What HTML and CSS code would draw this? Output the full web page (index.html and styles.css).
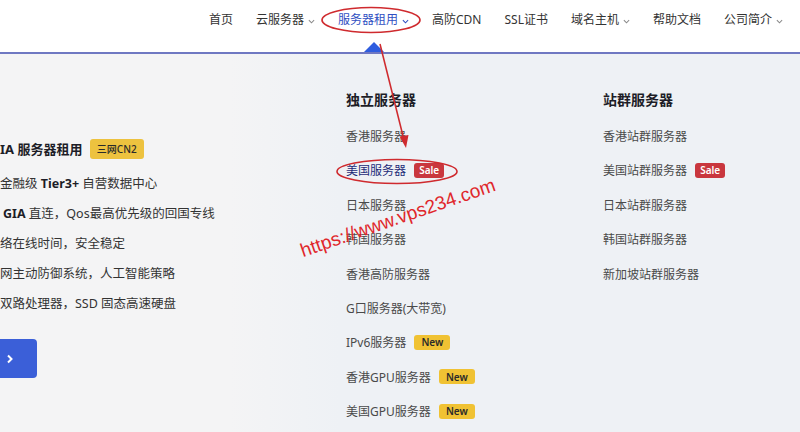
FILE: index.html
```html
<!DOCTYPE html>
<html lang="zh-CN">
<head>
    <meta charset="UTF-8">
    <meta name="viewport" content="width=device-width, initial-scale=1.0">
    <title>服务器租用</title>
    <link rel="stylesheet" href="styles.css">
</head>
<body>
    <header class="topbar">
        <nav class="menu">
            <a class="menu-item" href="#">首页</a>
            <a class="menu-item" href="#">云服务器<svg class="chev" viewBox="0 0 8 5"><path d="M1 1l3 3 3-3"/></svg></a>
            <a class="menu-item active" href="#">服务器租用<svg class="chev" viewBox="0 0 8 5"><path d="M1 1l3 3 3-3"/></svg><span class="caret"></span></a>
            <a class="menu-item" href="#">高防CDN</a>
            <a class="menu-item" href="#">SSL证书</a>
            <a class="menu-item" href="#">域名主机<svg class="chev" viewBox="0 0 8 5"><path d="M1 1l3 3 3-3"/></svg></a>
            <a class="menu-item" href="#">帮助文档</a>
            <a class="menu-item" href="#">公司简介<svg class="chev" viewBox="0 0 8 5"><path d="M1 1l3 3 3-3"/></svg></a>
        </nav>
    </header>

    <main class="mega">
        <section class="promo">
            <h3 class="promo-title">IA 服务器租用 <span class="tag tag-cn2">三网CN2</span></h3>
            <ul class="promo-list">
                <li>金融级 <b>Tier3+</b> 自营数据中心</li>
                <li class="indent"><b>GIA</b> 直连，Qos最高优先级的回国专线</li>
                <li>络在线时间，安全稳定</li>
                <li>网主动防御系统，人工智能策略</li>
                <li>双路处理器，SSD 固态高速硬盘</li>
            </ul>
            <a class="promo-btn" href="#"><svg viewBox="0 0 8 10"><path d="M2 1.5l3.5 3.5-3.5 3.5"/></svg></a>
        </section>

        <section class="col">
            <h4>独立服务器</h4>
            <ul>
                <li>香港服务器</li>
                <li class="hot">美国服务器 <span class="tag tag-sale">Sale</span></li>
                <li>日本服务器</li>
                <li>韩国服务器</li>
                <li>香港高防服务器</li>
                <li>G口服务器(大带宽)</li>
                <li>IPv6服务器 <span class="tag tag-new">New</span></li>
                <li>香港GPU服务器 <span class="tag tag-new">New</span></li>
                <li>美国GPU服务器 <span class="tag tag-new">New</span></li>
            </ul>
        </section>

        <section class="col">
            <h4>站群服务器</h4>
            <ul>
                <li>香港站群服务器</li>
                <li>美国站群服务器 <span class="tag tag-sale">Sale</span></li>
                <li>日本站群服务器</li>
                <li>韩国站群服务器</li>
                <li>新加坡站群服务器</li>
            </ul>
        </section>
    </main>

    <!-- red annotations drawn over the screenshot -->
    <svg class="marks" viewBox="0 0 800 432">
        <ellipse cx="371" cy="20" rx="49" ry="12.5"/>
        <ellipse cx="397" cy="171.5" rx="60" ry="12"/>
        <path d="M380 44L404 140"/>
        <path class="head" d="M399.5 136.5L406 148l2.5-13z"/>
    </svg>
    <span class="watermark">https://www.vps234.com</span>
</body>
</html>
```

FILE: styles.css
```css
body {
    margin: 0;
    height: 432px;
    overflow: hidden;
    position: relative;
    font-family: "Noto Sans", "Noto Sans CJK SC", sans-serif;
    background: linear-gradient(to right, #f4f4f5 0, #f4f4f5 230px, #eef1f5 340px, #eef1f5 100%);
}

/* top navigation */
.topbar {
    height: 54px;
    box-sizing: border-box;
    background: #fff;
    border-bottom: 2px solid #6f78c2;
}
.menu {
    display: flex;
    justify-content: flex-end;
    gap: 23px;
    height: 100%;
    padding-right: 17px;
}
.menu-item {
    position: relative;
    display: flex;
    align-items: flex-start;
    padding-top: 11px;
    font-size: 12px;
    line-height: 18px;
    color: #333;
    text-decoration: none;
}
.chev {
    width: 7px;
    height: 5px;
    margin: 8px 0 0 4px;
    fill: none;
    stroke: #8a8a8a;
    stroke-width: 1.2;
}
.menu-item.active {
    color: #2f4fc2;
}
.menu-item.active .chev {
    stroke: #2f4fc2;
}
.caret {
    position: absolute;
    left: 50%;
    bottom: 0;
    transform: translateX(-50%);
    border-left: 10px solid transparent;
    border-right: 10px solid transparent;
    border-bottom: 10px solid #2f5ddf;
}

/* dropdown panel */
.mega {
    display: grid;
    grid-template-columns: 346px 257px 1fr;
    height: 378px;
}

.promo {
    padding-top: 84px;
}
.promo-title {
    display: flex;
    align-items: center;
    margin: 0;
    font-size: 13px;
    line-height: 22px;
    font-weight: 700;
    color: #1d1d27;
    white-space: pre;
}
.promo-list {
    list-style: none;
    margin: 9px 0 0;
    padding: 0;
}
.promo-list li {
    font-size: 12.5px;
    line-height: 30px;
    color: #333;
    white-space: nowrap;
}
.promo-list li.indent {
    padding-left: 3px;
}
.promo-list b {
    color: #1d1d27;
}
.promo-btn {
    display: flex;
    align-items: center;
    width: 37px;
    height: 39px;
    margin-top: 20px;
    padding-left: 6px;
    box-sizing: border-box;
    background: #3b5fd8;
    border-radius: 0 4px 4px 0;
}
.promo-btn svg {
    width: 8px;
    height: 10px;
    fill: none;
    stroke: #fff;
    stroke-width: 2;
}

.col {
    padding-top: 36px;
}
.col h4 {
    margin: 0 0 16px;
    font-size: 14px;
    line-height: 20px;
    font-weight: 700;
    color: #1d1d27;
}
.col ul {
    list-style: none;
    margin: 0;
    padding: 0;
    display: flex;
    flex-direction: column;
    gap: 14.4px;
}
.col li {
    display: flex;
    align-items: center;
    gap: 5px;
    height: 20px;
    font-size: 12px;
    color: #4a4a4a;
    white-space: pre;
}
.col li.hot {
    color: #1f2b78;
}

.tag {
    display: inline-flex;
    align-items: center;
    height: 15px;
    padding: 0 5px;
    border-radius: 3px;
    font-size: 10px;
    font-weight: 600;
}
.tag-sale {
    background: #c9373e;
    color: #fff;
}
.tag-new {
    background: #f0c233;
    color: #2a2a2a;
    padding: 0 7px;
}
.tag-cn2 {
    height: 20px;
    margin-left: 4px;
    padding: 0 7px;
    background: #edc23f;
    color: #2a2a2a;
    font-weight: 500;
}

/* overlays */
.marks {
    position: absolute;
    left: 0;
    top: 0;
    width: 800px;
    height: 432px;
    pointer-events: none;
    fill: none;
    stroke: #cf2a2e;
    stroke-width: 1.6;
}
.marks .head {
    fill: #cf2a2e;
    stroke: none;
}
.watermark {
    position: absolute;
    left: 304px;
    top: 241px;
    font-family: "Liberation Sans", Arial, sans-serif;
    font-size: 19px;
    line-height: 19px;
    color: #e0262a;
    transform: rotate(-19deg);
    transform-origin: 0 100%;
    white-space: nowrap;
}
```
